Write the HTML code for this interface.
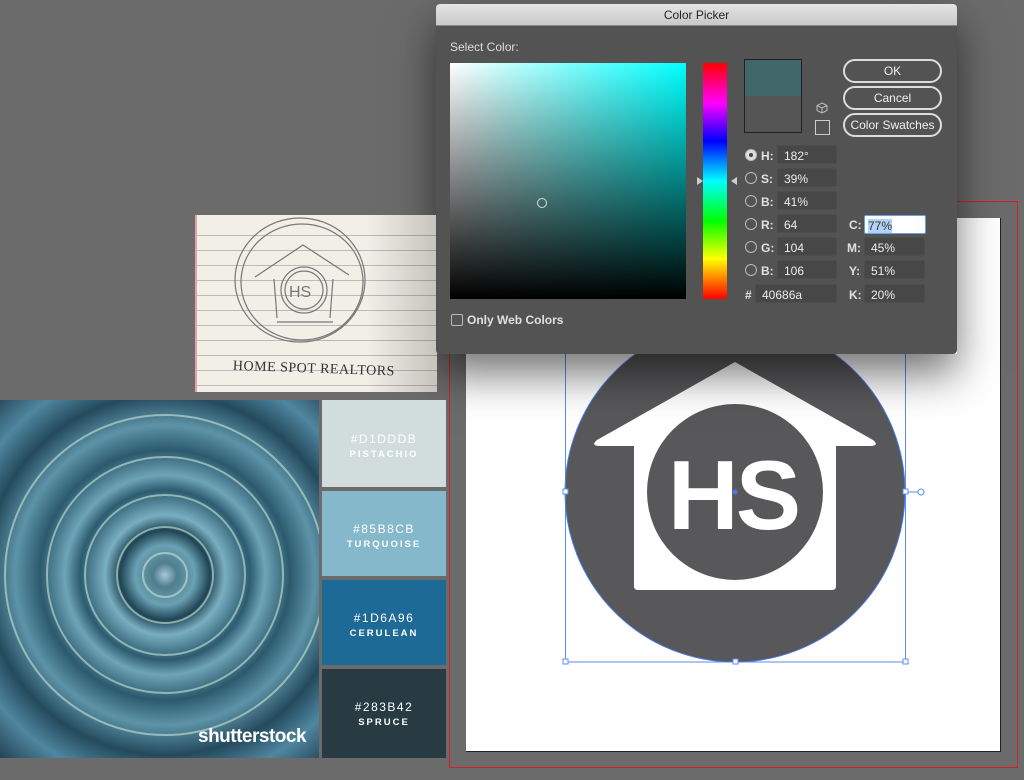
<!DOCTYPE html>
<html><head><meta charset="utf-8"><style>
*{margin:0;padding:0;box-sizing:border-box}
body{width:1024px;height:780px;background:#6b6b6b;position:relative;overflow:hidden;font-family:"Liberation Sans",sans-serif}
.a{position:absolute}
.lbl{color:#e0e0e0;font-size:12px;font-weight:bold}
.fld{position:absolute;background:#474747;border:1px solid #4d4d4d;color:#ececec;font-size:12px;padding:3px 0 0 6px;height:19px;border-radius:2px}
.rad{position:absolute;width:12px;height:12px;border:1px solid #bbb;border-radius:50%}
.btn{position:absolute;left:843px;width:99px;height:24px;border:2px solid #ddd;border-radius:12px;color:#f0f0f0;font-size:12px;text-align:center;line-height:21px}
.sw{position:absolute;left:322px;width:124px;color:#fff;text-align:center;font-size:12px;letter-spacing:1.5px}
.sw b{display:block;font-size:9.5px;letter-spacing:2px;margin-top:3px}
</style></head><body>
<div class="a" style="left:449px;top:201px;width:569px;height:567px;background:#d42020;padding:1px"><div style="width:100%;height:100%;background:#6b6b6b"></div></div>
<div class="a" style="left:466px;top:218px;width:535px;height:534px;background:#fff;border-right:1px solid #222;border-bottom:1px solid #222"></div>
<svg class="a" style="left:440px;top:300px" width="584" height="480">
<circle cx="295" cy="192" r="170" fill="#58585a"/>
<path d="M295 62 L433 140 Q440 146 430 146 L396 146 L396 286 Q396 290 392 290 L198 290 Q194 290 194 286 L194 146 L160 146 Q150 146 157 140 Z" fill="#fff"/>
<circle cx="295" cy="192" r="88" fill="#58585a"/>
<text x="293" y="229" text-anchor="middle" font-family="Liberation Sans" font-weight="bold" font-size="98" letter-spacing="-3" fill="#fff">HS</text>
<rect x="125.5" y="22" width="340" height="340" fill="none" stroke="#5b8ef0" stroke-width="1"/>
<circle cx="295" cy="192" r="170" fill="none" stroke="#4a7be8" stroke-width="1"/>
<g fill="#fff" stroke="#5b8ef0"><rect x="123" y="189" width="5" height="5"/><rect x="463" y="189" width="5" height="5"/><rect x="123" y="359" width="5" height="5"/><rect x="293" y="359" width="5" height="5"/><rect x="463" y="359" width="5" height="5"/></g>
<line x1="468" y1="192" x2="478" y2="192" stroke="#5b8ef0"/><circle cx="481" cy="192" r="3" fill="#fff" stroke="#5b8ef0"/><circle cx="295" cy="192" r="2.5" fill="#4a7be8"/>
</svg>
<div class="a" style="left:436px;top:4px;width:521px;height:350px;box-shadow:0 20px 40px rgba(0,0,0,.55)"></div>
<div class="a" style="left:195px;top:215px;width:242px;height:177px;background:repeating-linear-gradient(#f1efe6 0,#f1efe6 14px,#b9b9c0 14px,#b9b9c0 15px);background-position:0 6px;border-left:2px solid #e6a0a8">
<svg width="240" height="177" style="position:absolute;left:0;top:0"><g fill="none" stroke="#777" stroke-width="1.2"><ellipse cx="103" cy="65" rx="65" ry="62"/><ellipse cx="105" cy="67" rx="61" ry="58"/><path d="M58 62 L106 30 L152 60 M77 64 L80 103 M136 64 L133 103 M80 107 L136 107"/><circle cx="107" cy="75" r="23"/><circle cx="107" cy="75" r="19"/><text x="92" y="82" font-size="16" fill="#777" stroke="none" font-family="Liberation Sans">HS</text></g><text x="36" y="157" font-size="14" fill="#333" font-family="Liberation Serif" letter-spacing="0.5" transform="rotate(2 100 150)">HOME  SPOT  REALTORS</text></svg>
<div class="a" style="right:0;top:0;width:70px;height:177px;background:linear-gradient(90deg,rgba(0,0,0,0),rgba(0,0,0,.18))"></div></div>
<div class="a" style="left:0;top:400px;width:319px;height:358px;background:radial-gradient(circle at 165px 175px,#a9c6d6 0,#4f7e8e 12px,#6aa1b3 30px,#1f4455 45px,#79afc0 60px,#2d5c70 85px,#6fa4b8 100px,#2c5a6d 125px,#5d93a8 150px,#244a5c 180px,#4f86a0 210px,#1e3c4c 250px);overflow:hidden">
<svg width="319" height="358"><g fill="none" stroke="#c8e6d6" stroke-width="2" opacity=".6"><circle cx="165" cy="175" r="22"/><circle cx="165" cy="175" r="48"/><circle cx="165" cy="175" r="80"/><circle cx="165" cy="175" r="118"/><circle cx="165" cy="175" r="160"/></g></svg>
<div class="a" style="left:198px;top:326px;color:#fff;font-size:19px;font-weight:bold;letter-spacing:-.5px">shutterstock</div></div>
<div class="sw" style="top:400px;height:87px;background:#d1dddb;padding-top:32px">#D1DDDB<b>PISTACHIO</b></div>
<div class="sw" style="top:491px;height:85px;background:#85b8cb;padding-top:31px">#85B8CB<b>TURQUOISE</b></div>
<div class="sw" style="top:580px;height:85px;background:#1d6a96;padding-top:31px">#1D6A96<b>CERULEAN</b></div>
<div class="sw" style="top:669px;height:89px;background:#283b42;padding-top:31px">#283B42<b>SPRUCE</b></div>
<div class="a" style="left:436px;top:4px;width:521px;height:350px;background:#535353;border-radius:4px;overflow:hidden">
<div style="height:22px;background:linear-gradient(#e4e4e4,#c9c9c9);text-align:center;font-size:12px;line-height:22px;color:#222;border-bottom:1px solid #888">Color Picker</div></div>
<div class="a lbl" style="left:450px;top:40px;font-weight:normal;color:#ddd">Select Color:</div>
<div class="a" style="left:450px;top:63px;width:236px;height:236px;background:linear-gradient(to top,#000,rgba(0,0,0,0)),linear-gradient(to right,#fff,#0ff)"></div>
<div class="a" style="left:537px;top:198px;width:10px;height:10px;border:1px solid #ddd;border-radius:50%"></div>
<div class="a" style="left:703px;top:63px;width:24px;height:236px;background:linear-gradient(#f00,#f0f 17%,#00f 33%,#0ff 50%,#0f0 67%,#ff0 83%,#f00)"></div>
<div class="a" style="left:697px;top:177px;width:0;height:0;border:4px solid transparent;border-left:6px solid #ccc"></div>
<div class="a" style="left:727px;top:177px;width:0;height:0;border:4px solid transparent;border-right:6px solid #ccc"></div>
<div class="a" style="left:744px;top:59px;width:58px;height:74px;border:1px solid #222"><div style="height:36px;background:#40686a"></div><div style="height:36px;background:#555"></div></div>
<svg class="a" style="left:816px;top:102px" width="12" height="12"><path d="M6 1L11 3.5V8.5L6 11L1 8.5V3.5Z M1 3.5L6 6L11 3.5M6 6V11" fill="none" stroke="#bbb"/></svg>
<div class="a" style="left:815px;top:120px;width:15px;height:15px;border:1px solid #ccc;background:#555"></div>
<div class="btn" style="top:59px">OK</div>
<div class="btn" style="top:86px">Cancel</div>
<div class="btn" style="top:113px">Color Swatches</div>
<div class="rad" style="left:745px;top:149px;background:#ddd"><div style="width:4px;height:4px;background:#444;border-radius:50%;margin:3px"></div></div>
<div class="rad" style="left:745px;top:172px"></div><div class="rad" style="left:745px;top:195px"></div><div class="rad" style="left:745px;top:218px"></div><div class="rad" style="left:745px;top:241px"></div><div class="rad" style="left:745px;top:264px"></div>
<div class="a lbl" style="left:761px;top:149px">H:</div><div class="a lbl" style="left:761px;top:172px">S:</div><div class="a lbl" style="left:761px;top:195px">B:</div><div class="a lbl" style="left:761px;top:218px">R:</div><div class="a lbl" style="left:761px;top:241px">G:</div><div class="a lbl" style="left:761px;top:264px">B:</div><div class="a lbl" style="left:745px;top:288px">#</div>
<div class="fld" style="left:777px;top:145px;width:60px">182°</div>
<div class="fld" style="left:777px;top:168px;width:60px">39%</div>
<div class="fld" style="left:777px;top:191px;width:60px">41%</div>
<div class="fld" style="left:777px;top:214px;width:60px">64</div>
<div class="fld" style="left:777px;top:237px;width:60px">104</div>
<div class="fld" style="left:777px;top:260px;width:60px">106</div>
<div class="fld" style="left:755px;top:284px;width:82px">40686a</div>
<div class="a lbl" style="left:849px;top:218px">C:</div><div class="a lbl" style="left:847px;top:241px">M:</div><div class="a lbl" style="left:849px;top:264px">Y:</div><div class="a lbl" style="left:849px;top:288px">K:</div>
<div class="fld" style="left:864px;top:215px;width:62px;background:#fff;border:1px solid #6aa0e8;color:#333;padding-left:3px"><span style="background:#b3d3f5">77%</span></div>
<div class="fld" style="left:864px;top:237px;width:61px">45%</div>
<div class="fld" style="left:864px;top:260px;width:61px">51%</div>
<div class="fld" style="left:864px;top:284px;width:61px">20%</div>
<div class="a" style="left:451px;top:314px;width:12px;height:12px;border:1px solid #bbb;border-radius:2px"></div>
<div class="a lbl" style="left:467px;top:313px">Only Web Colors</div>
</body></html>
